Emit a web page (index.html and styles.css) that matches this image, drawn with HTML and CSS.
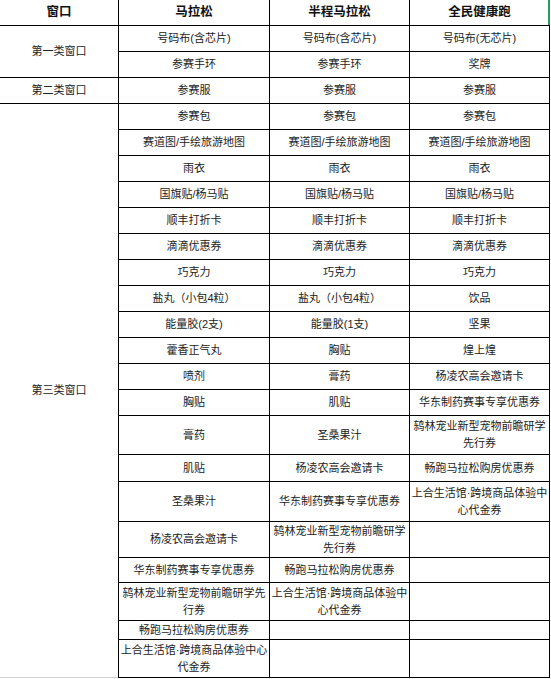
FILE: index.html
```html
<!DOCTYPE html>
<html lang="zh-CN">
<head>
<meta charset="utf-8">
<title>窗口物资表</title>
<link rel="stylesheet" href="styles.css">
</head>
<body>
<div class="sheet">
  <div class="cell head">窗口</div>
  <div class="cell head">马拉松</div>
  <div class="cell head">半程马拉松</div>
  <div class="cell head last-col head-sel">全民健康跑</div>

  <div class="cell span2">第一类窗口</div>
  <div class="cell">号码布(含芯片)</div>
  <div class="cell">号码布(含芯片)</div>
  <div class="cell last-col">号码布(无芯片)</div>
  <div class="cell">参赛手环</div>
  <div class="cell">参赛手环</div>
  <div class="cell last-col">奖牌</div>

  <div class="cell">第二类窗口</div>
  <div class="cell">参赛服</div>
  <div class="cell">参赛服</div>
  <div class="cell last-col">参赛服</div>

  <div class="cell span20 first-bottom">第三类窗口</div>
  <div class="cell">参赛包</div>
  <div class="cell">参赛包</div>
  <div class="cell last-col">参赛包</div>
  <div class="cell">赛道图/手绘旅游地图</div>
  <div class="cell">赛道图/手绘旅游地图</div>
  <div class="cell last-col">赛道图/手绘旅游地图</div>
  <div class="cell">雨衣</div>
  <div class="cell">雨衣</div>
  <div class="cell last-col">雨衣</div>
  <div class="cell">国旗贴/杨马贴</div>
  <div class="cell">国旗贴/杨马贴</div>
  <div class="cell last-col">国旗贴/杨马贴</div>
  <div class="cell">顺丰打折卡</div>
  <div class="cell">顺丰打折卡</div>
  <div class="cell last-col">顺丰打折卡</div>
  <div class="cell">滴滴优惠券</div>
  <div class="cell">滴滴优惠券</div>
  <div class="cell last-col">滴滴优惠券</div>
  <div class="cell">巧克力</div>
  <div class="cell">巧克力</div>
  <div class="cell last-col">巧克力</div>
  <div class="cell">盐丸（小包4粒）</div>
  <div class="cell">盐丸（小包4粒）</div>
  <div class="cell last-col">饮品</div>
  <div class="cell">能量胶(2支)</div>
  <div class="cell">能量胶(1支)</div>
  <div class="cell last-col">坚果</div>
  <div class="cell">藿香正气丸</div>
  <div class="cell">胸贴</div>
  <div class="cell last-col">煌上煌</div>
  <div class="cell">喷剂</div>
  <div class="cell">膏药</div>
  <div class="cell last-col">杨凌农高会邀请卡</div>
  <div class="cell">胸贴</div>
  <div class="cell">肌贴</div>
  <div class="cell last-col">华东制药赛事专享优惠券</div>
  <div class="cell">膏药</div>
  <div class="cell">圣桑果汁</div>
  <div class="cell last-col">鸫林宠业新型宠物前瞻研学先行券</div>
  <div class="cell">肌贴</div>
  <div class="cell">杨凌农高会邀请卡</div>
  <div class="cell last-col">畅跑马拉松购房优惠券</div>
  <div class="cell">圣桑果汁</div>
  <div class="cell">华东制药赛事专享优惠券</div>
  <div class="cell last-col">上合生活馆·跨境商品体验中心代金券</div>
  <div class="cell">杨凌农高会邀请卡</div>
  <div class="cell">鸫林宠业新型宠物前瞻研学先行券</div>
  <div class="cell last-col"></div>
  <div class="cell">华东制药赛事专享优惠券</div>
  <div class="cell">畅跑马拉松购房优惠券</div>
  <div class="cell last-col"></div>
  <div class="cell">鸫林宠业新型宠物前瞻研学先行券</div>
  <div class="cell">上合生活馆·跨境商品体验中心代金券</div>
  <div class="cell last-col"></div>
  <div class="cell">畅跑马拉松购房优惠券</div>
  <div class="cell"></div>
  <div class="cell last-col"></div>
  <div class="cell bottom">上合生活馆·跨境商品体验中心代金券</div>
  <div class="cell bottom"></div>
  <div class="cell bottom last-col"></div>
</div>
</body>
</html>
```

FILE: styles.css
```css
html, body {
  margin: 0;
  padding: 0;
  background: #ffffff;
}

.sheet {
  display: grid;
  width: 550px;
  grid-template-columns: 118px 150px 139px 140px;
  grid-template-rows:
    25px
    repeat(15, 25px)
    38px 26px 39px 35px 24px 37px 18px 38px;
  gap: 1px;
  background: #000000;
  font-family: "Liberation Sans", "Noto Sans CJK SC", sans-serif;
  font-size: 11px;
  line-height: 17px;
  color: #222222;
}

.cell {
  box-sizing: border-box;
  background: #ffffff;
  display: flex;
  align-items: center;
  justify-content: center;
  text-align: center;
  padding: 0 1px;
  overflow: hidden;
}

.head {
  font-weight: bold;
  font-size: 12.5px;
  color: #111111;
}

.last-col {
  border-right: 1px solid #000000;
}

.head-sel {
  border-right: 1px solid #2f9a5c;
  box-shadow: inset -1px 0 0 #2f9a5c;
}

.span2 {
  grid-row: span 2;
}

.span20 {
  grid-row: span 20;
}

.first-bottom {
  border-bottom: 1px solid #d4d4d4;
}

.bottom {
  border-bottom: 1px solid #000000;
}
```
